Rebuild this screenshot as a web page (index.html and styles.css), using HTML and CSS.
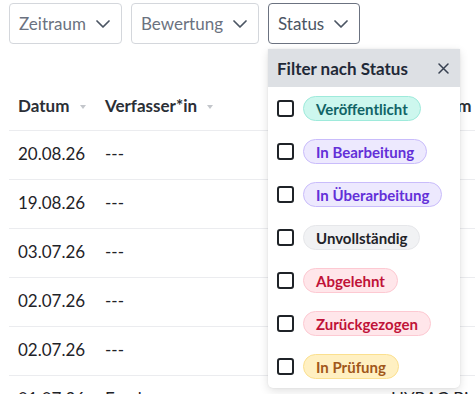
FILE: index.html
```html
<!DOCTYPE html>
<html lang="de">

<head>
  <meta charset="UTF-8">
  <meta name="viewport" content="width=device-width, initial-scale=1.0">
  <title>Einreichungen</title>
  <link rel="stylesheet" href="styles.css">
</head>

<body>
  <div class="page">
    <div class="filters">
      <div class="filter">
        <button class="filter-button">Zeitraum
          <svg class="chevron" width="14" height="8" viewBox="0 0 14 8"><path d="M1 1l6 6 6-6" /></svg>
        </button>
      </div>
      <div class="filter">
        <button class="filter-button">Bewertung
          <svg class="chevron" width="14" height="8" viewBox="0 0 14 8"><path d="M1 1l6 6 6-6" /></svg>
        </button>
      </div>
      <div class="filter">
        <button class="filter-button active">Status
          <svg class="chevron" width="14" height="8" viewBox="0 0 14 8"><path d="M1 1l6 6 6-6" /></svg>
        </button>

        <div class="dropdown">
          <div class="dropdown-header">
            <span>Filter nach Status</span>
            <svg class="close" width="11" height="11" viewBox="0 0 11 11"><path d="M1 1l9 9M10 1l-9 9" /></svg>
          </div>
          <label class="option"><span class="checkbox"></span><span class="badge teal">Veröffentlicht</span></label>
          <label class="option"><span class="checkbox"></span><span class="badge violet">In Bearbeitung</span></label>
          <label class="option"><span class="checkbox"></span><span class="badge violet">In Überarbeitung</span></label>
          <label class="option"><span class="checkbox"></span><span class="badge gray">Unvollständig</span></label>
          <label class="option"><span class="checkbox"></span><span class="badge red">Abgelehnt</span></label>
          <label class="option"><span class="checkbox"></span><span class="badge red">Zurückgezogen</span></label>
          <label class="option"><span class="checkbox"></span><span class="badge amber">In Prüfung</span></label>
        </div>
      </div>
    </div>

    <div class="table-wrap">
      <table class="table">
        <thead>
          <tr>
            <th class="col-date">Datum <span class="sort"></span></th>
            <th class="col-author">Verfasser*in <span class="sort"></span></th>
            <th class="col-org">Erstellt am <span class="sort"></span></th>
          </tr>
        </thead>
        <tbody>
          <tr><td>20.08.26</td><td>---</td><td></td></tr>
          <tr><td>19.08.26</td><td>---</td><td></td></tr>
          <tr><td>03.07.26</td><td>---</td><td></td></tr>
          <tr><td>02.07.26</td><td>---</td><td></td></tr>
          <tr><td>02.07.26</td><td>---</td><td></td></tr>
          <tr><td>01.07.26</td><td>Frank</td><td>HYBAG Bi</td></tr>
        </tbody>
      </table>
    </div>
  </div>
</body>

</html>
```

FILE: styles.css
```css
body {
  font-family: Lato, "Noto Sans", sans-serif;
  background-color: #ffffff;
  color: #1f2937;
  margin: 0;
  padding: 0;
  overflow: hidden;
}

.page {
  padding: 3px 0 0 9px;
}

.filters {
  display: flex;
  gap: 9px;
}

.filter {
  position: relative;
}

.filter-button {
  display: flex;
  align-items: center;
  gap: 10px;
  height: 41px;
  padding: 0 11px 0 9px;
  font-family: inherit;
  font-size: 17px;
  color: #6b7280;
  background-color: #ffffff;
  border: 1px solid #d4d7dc;
  border-radius: 4px;
  cursor: pointer;
}

.filter-button.active {
  color: #4b5563;
  border-color: #6b7280;
}

.chevron path {
  fill: none;
  stroke: #4b5563;
  stroke-width: 1.7;
  stroke-linecap: round;
  stroke-linejoin: round;
}

/* status dropdown */
.dropdown {
  position: absolute;
  top: 46px;
  left: 0;
  width: 192px;
  background-color: #ffffff;
  border-radius: 0 0 5px 5px;
  box-shadow: 0 3px 10px rgba(0, 0, 0, 0.12), 0 0 2px rgba(0, 0, 0, 0.08);
  z-index: 2;
}

.dropdown-header {
  display: flex;
  align-items: center;
  justify-content: space-between;
  height: 38px;
  padding: 0 11px 0 9px;
  background-color: #dde0e4;
  font-size: 17px;
  font-weight: 700;
  color: #1f2937;
}

.close path {
  stroke: #374151;
  stroke-width: 1.5;
  stroke-linecap: round;
}

.option {
  display: flex;
  align-items: center;
  gap: 9px;
  height: 43px;
  padding-left: 9px;
}

.checkbox {
  width: 17px;
  height: 17px;
  box-sizing: border-box;
  border: 2px solid #1f2328;
  border-radius: 3px;
}

.badge {
  display: inline-flex;
  align-items: center;
  height: 25px;
  box-sizing: border-box;
  padding: 0 12px;
  font-size: 15px;
  font-weight: 700;
  border: 1px solid;
  border-radius: 13px;
}

.badge.teal {
  background-color: #cdf7ee;
  border-color: #9eeadb;
  color: #116466;
}

.badge.violet {
  background-color: #ede9fe;
  border-color: #c9bcfb;
  color: #6330d8;
}

.badge.gray {
  background-color: #f1f2f4;
  border-color: #e6e7ea;
  color: #1f2328;
}

.badge.red {
  background-color: #ffe6ea;
  border-color: #fdc9d2;
  color: #bf1238;
}

.badge.amber {
  background-color: #fff0c2;
  border-color: #fbe08f;
  color: #a1571a;
}

/* table */
.table-wrap {
  margin-top: 36px;
  overflow: hidden;
}

.table {
  border-collapse: collapse;
  table-layout: fixed;
  width: 720px;
}

.table th,
.table td {
  padding: 0 0 0 9px;
  text-align: left;
  white-space: nowrap;
  overflow: hidden;
  border-bottom: 1px solid #ebecef;
}

.table th {
  height: 50px;
  font-size: 17px;
  font-weight: 700;
  color: #2b2f36;
}

.table td {
  height: 49px;
  padding-bottom: 4px;
  box-sizing: border-box;
  font-size: 17px;
  color: #1f2328;
}

.col-date {
  width: 78px;
}

.col-author {
  width: 277px;
}

.sort {
  display: inline-block;
  margin-left: 6px;
  vertical-align: middle;
  border-left: 3px solid transparent;
  border-right: 3px solid transparent;
  border-top: 4px solid #c3c6cb;
}
```
